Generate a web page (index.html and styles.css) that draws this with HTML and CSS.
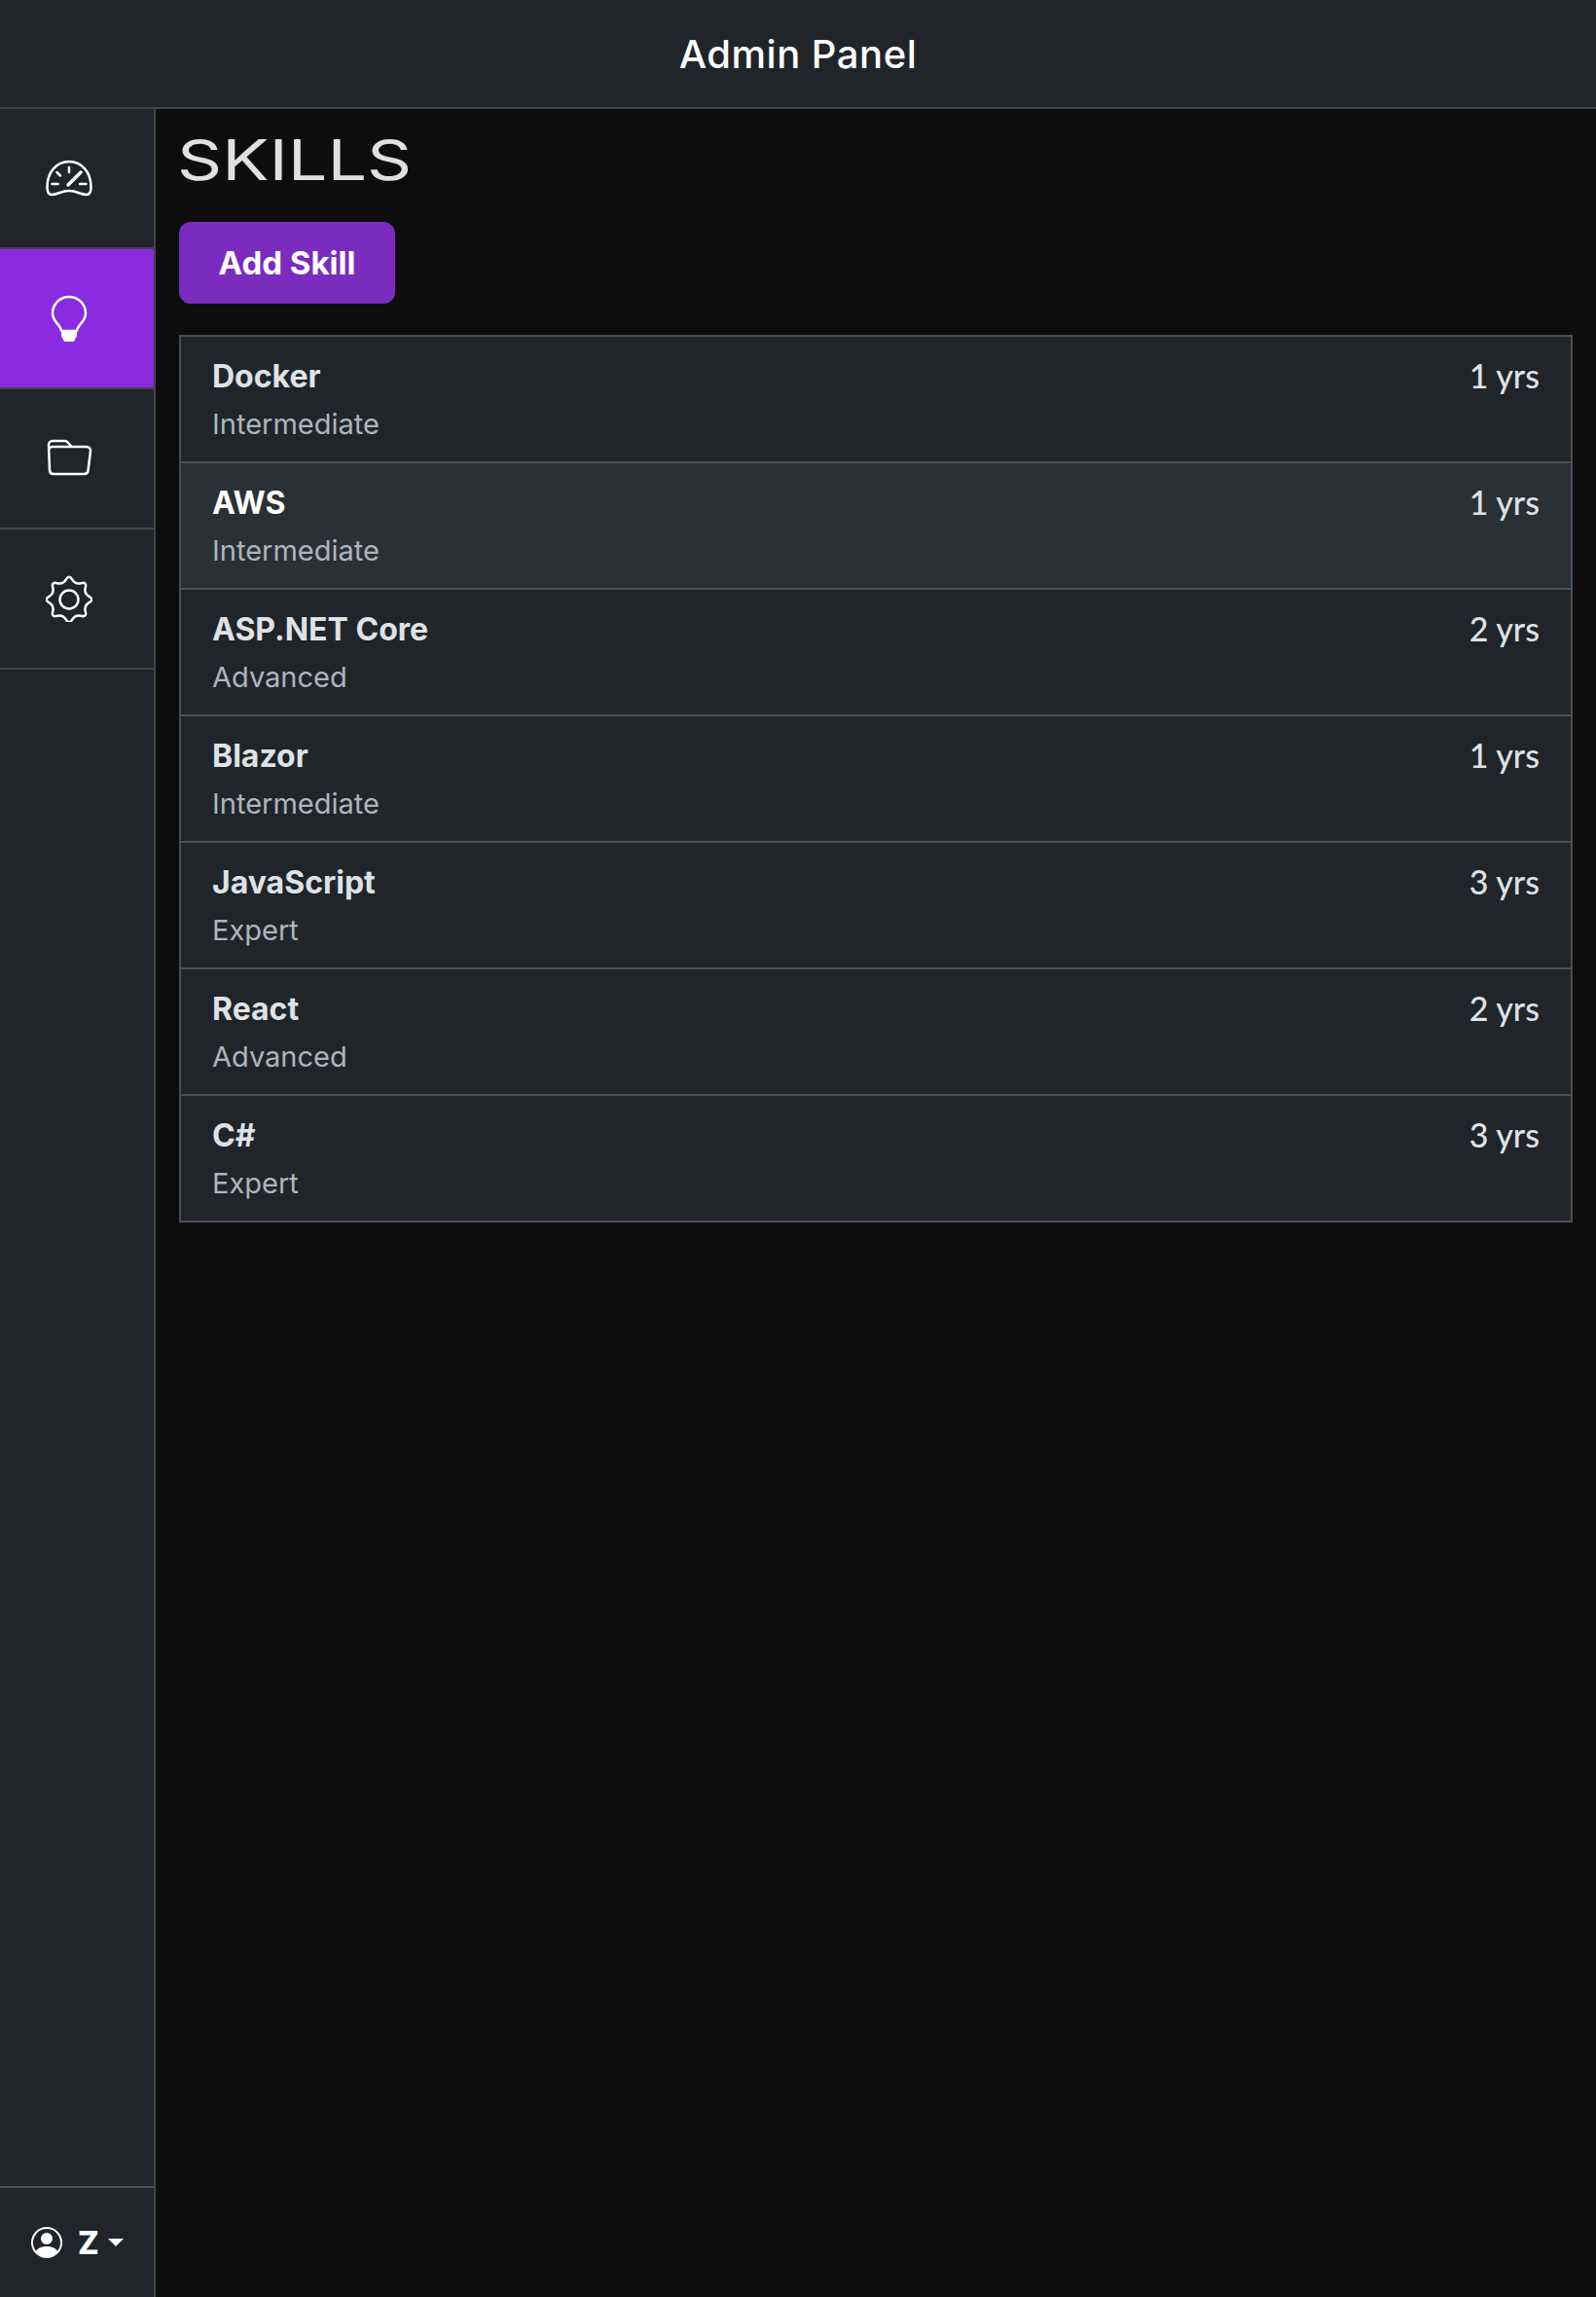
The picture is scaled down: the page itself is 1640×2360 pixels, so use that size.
FILE: index.html
```html
<!DOCTYPE html>
<html lang="en">
<head>
    <meta charset="UTF-8">
    <title>Admin Panel</title>
    <link rel="stylesheet" href="styles.css">
</head>
<body>
    <header class="topbar">Admin Panel</header>
    <div class="layout">
        <nav class="sidebar">
            <a class="nav-item">
                <svg class="nav-icon" viewBox="0 0 48 48"><path d="M6,41 C3,41 1.5,38 1.5,33 C1.5,18 11,7 24,7 C37,7 46.5,18 46.5,33 C46.5,38 45,41 42,41 C36,41 32,37 24,37 C16,37 12,41 6,41 Z"/><path d="M24,13 V18 M11.5,18 L15,21.5 M6.5,30 H12.5 M35,30 H41.5"/><path class="needle" d="M23,31 L36,18"/></svg>
            </a>
            <a class="nav-item active">
                <svg class="nav-icon" viewBox="0 -1 48 48"><path d="M16,36 C16,30 7,27 7,18 A17,17 0 1 1 41,18 C41,27 32,30 32,36 Z"/><path class="solid" d="M16,37 H32 V41 L30,45 Q29,47.5 27,47.5 H21 Q19,47.5 18,45 L16,41 Z"/></svg>
            </a>
            <a class="nav-item">
                <svg class="nav-icon" viewBox="0 0 48 48"><path d="M3,10 a4,4 0 0 1 4,-4 h12.5 a4,4 0 0 1 3,1.3 l4,4.7 h15.5 a4,4 0 0 1 4,4.5 l-2.5,20 a4,4 0 0 1 -4,3.5 H8 a4,4 0 0 1 -4,-3.5 Z"/><path d="M3.5,14 a4,4 0 0 1 4,-2 H26.5"/></svg>
            </a>
            <a class="nav-item">
                <svg class="nav-icon" viewBox="-24 -25 48 48"><path d="M-3.15,-20.6 Q0,-26 3.15,-20.6 Q6.3,-15.2 12.35,-16.8 Q18.4,-18.4 16.8,-12.35 Q15.2,-6.3 20.6,-3.15 Q26,0 20.6,3.15 Q15.2,6.3 16.8,12.35 Q18.4,18.4 12.35,16.8 Q6.3,15.2 3.15,20.6 Q0,26 -3.15,20.6 Q-6.3,15.2 -12.35,16.8 Q-18.4,18.4 -16.8,12.35 Q-15.2,6.3 -20.6,3.15 Q-26,0 -20.6,-3.15 Q-15.2,-6.3 -16.8,-12.35 Q-18.4,-18.4 -12.35,-16.8 Q-6.3,-15.2 -3.15,-20.6 Z"/><circle r="9.5"/></svg>
            </a>
            <div class="user-menu">
                <svg class="user-icon" viewBox="0 0 16 16"><path d="M11 6a3 3 0 1 1-6 0 3 3 0 0 1 6 0z"/><path fill-rule="evenodd" d="M0 8a8 8 0 1 1 16 0A8 8 0 0 1 0 8zm8-7a7 7 0 0 0-5.468 11.37C3.242 11.226 4.805 10 8 10s4.757 1.225 5.468 2.37A7 7 0 0 0 8 1z"/></svg>
                <span class="user-name">Z</span>
                <span class="caret"></span>
            </div>
        </nav>
        <main class="content">
            <h1 class="page-title">SKILLS</h1>
            <button class="add-btn">Add Skill</button>
            <ul class="skill-list">
                <li class="skill-item"><div><div class="skill-name">Docker</div><div class="skill-level">Intermediate</div></div><span class="skill-years">1 yrs</span></li>
                <li class="skill-item hovered"><div><div class="skill-name">AWS</div><div class="skill-level">Intermediate</div></div><span class="skill-years">1 yrs</span></li>
                <li class="skill-item"><div><div class="skill-name">ASP.NET Core</div><div class="skill-level">Advanced</div></div><span class="skill-years">2 yrs</span></li>
                <li class="skill-item"><div><div class="skill-name">Blazor</div><div class="skill-level">Intermediate</div></div><span class="skill-years">1 yrs</span></li>
                <li class="skill-item"><div><div class="skill-name">JavaScript</div><div class="skill-level">Expert</div></div><span class="skill-years">3 yrs</span></li>
                <li class="skill-item"><div><div class="skill-name">React</div><div class="skill-level">Advanced</div></div><span class="skill-years">2 yrs</span></li>
                <li class="skill-item"><div><div class="skill-name">C#</div><div class="skill-level">Expert</div></div><span class="skill-years">3 yrs</span></li>
            </ul>
        </main>
    </div>
</body>
</html>
```

FILE: styles.css
```css
* {
    box-sizing: border-box;
}
html, body {
    height: 100%;
}
body {
    margin: 0;
    display: flex;
    flex-direction: column;
    background-color: #0d0d0d;
    color: #dee2e6;
    font-family: Inter, sans-serif;
}
.topbar {
    height: 112px;
    flex: none;
    display: flex;
    align-items: center;
    justify-content: center;
    background-color: #212529;
    border-bottom: 2px solid #444;
    color: #fff;
    font-size: 40px;
    font-weight: 500;
    letter-spacing: 0.5px;
}
.layout {
    flex: 1;
    display: flex;
}
.sidebar {
    width: 160px;
    flex: none;
    display: flex;
    flex-direction: column;
    background-color: #212529;
    border-right: 2px solid #444;
}
.nav-item {
    height: 144px;
    display: flex;
    align-items: center;
    justify-content: center;
    padding-right: 16px;
    border-bottom: 2px solid #444;
}
.nav-item.active {
    background-color: #8a2be2;
}
.nav-icon {
    width: 48px;
    height: 48px;
    fill: none;
    stroke: #fff;
    stroke-width: 2.5;
    stroke-linecap: round;
    stroke-linejoin: round;
}
.nav-icon .needle {
    stroke-width: 3.5;
}
.nav-icon .solid {
    fill: #fff;
    stroke: none;
}
.user-menu {
    margin-top: auto;
    height: 114px;
    display: flex;
    align-items: center;
    gap: 16px;
    padding-left: 32px;
    border-top: 2px solid #495057;
    color: #fff;
}
.user-icon {
    width: 32px;
    height: 32px;
    fill: #fff;
}
.user-name {
    font-size: 32px;
    font-weight: 800;
}
.caret {
    width: 0;
    height: 0;
    margin-left: -7px;
    border-top: 8px solid #fff;
    border-left: 8px solid transparent;
    border-right: 8px solid transparent;
}
.content {
    flex: 1;
    padding: 0 24px;
}
.page-title {
    width: fit-content;
    margin: 20px 0 32px -2px;
    height: 64px;
    font-size: 58px;
    line-height: 64px;
    font-weight: 400;
    color: #e0e0e0;
    transform: scaleX(1.24);
    transform-origin: left center;
}
.add-btn {
    display: block;
    width: 222px;
    height: 84px;
    padding: 0;
    background-color: #7b2cbf;
    color: #fff;
    border: none;
    border-radius: 12px;
    font-family: inherit;
    font-size: 33px;
    font-weight: 700;
}
.skill-list {
    list-style-type: none;
    margin: 32px 0 0;
    padding: 0;
    border: 2px solid #495057;
    border-bottom: none;
}
.skill-item {
    height: 130px;
    display: flex;
    justify-content: space-between;
    padding: 20px 32px 0;
    background-color: #212529;
    border-bottom: 2px solid #495057;
}
.skill-item.hovered {
    background-color: #2b3035;
}
.skill-item.hovered .skill-name {
    color: #fff;
}
.skill-name {
    font-size: 32px;
    line-height: 42px;
    font-weight: 700;
}
.skill-level {
    margin-top: 8px;
    font-size: 29px;
    line-height: 40px;
    color: #adb5bd;
}
.skill-years {
    font-family: Lato, sans-serif;
    font-size: 34px;
    font-weight: 500;
    line-height: 40px;
}
```
